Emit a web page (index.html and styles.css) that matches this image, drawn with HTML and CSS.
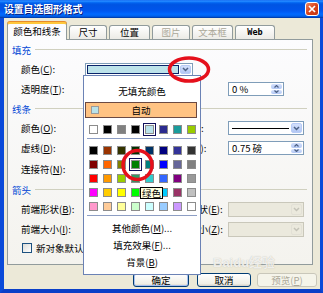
FILE: index.html
```html
<!DOCTYPE html>
<html lang="zh-CN">
<head>
  <meta charset="UTF-8">
  <meta name="viewport" content="width=device-width, initial-scale=1.0">
  <title>设置自选图形格式</title>
  <link rel="stylesheet" href="styles.css">
</head>
<body>

<div class="window">
  <div class="titlebar">
    <span class="title">设置自选图形格式</span>
    <span class="close-btn">
      <svg width="8" height="8" viewBox="0 0 8 8"><path d="M1 1L7 7M7 1L1 7" stroke="#fff" stroke-width="1.7"/></svg>
    </span>
  </div>

  <div class="dialog">
    <div class="tabs">
      <div class="tab active">颜色和线条</div>
      <div class="tab t-size">尺寸</div>
      <div class="tab t-pos">位置</div>
      <div class="tab t-pic disabled">图片</div>
      <div class="tab t-text disabled">文本框</div>
      <div class="tab t-web">Web</div>
    </div>

    <div class="panel">
      <div class="section-head"><span>填充</span></div>
      <div class="row">
        <span class="lbl">颜色(<u>C</u>):</span>
        <div class="combo fill-combo">
          <span class="fill-swatch"></span>
          <span class="drop-btn"><svg width="7" height="5" viewBox="0 0 7 5"><path d="M1 1l2.5 2.5L6 1" fill="none" stroke="#4d6185" stroke-width="1.5"/></svg></span>
        </div>
      </div>
      <div class="row">
        <span class="lbl">透明度(<u>T</u>):</span>
        <span></span>
        <span></span>
        <div class="spin short">
          <span class="val">0 %</span>
          <span class="spin-btns">
            <span><svg width="5" height="3" viewBox="0 0 5 3"><path d="M0.5 2.5l2-2 2 2" fill="none" stroke="#4d6185" stroke-width="1.2"/></svg></span>
            <span><svg width="5" height="3" viewBox="0 0 5 3"><path d="M0.5 0.5l2 2 2-2" fill="none" stroke="#4d6185" stroke-width="1.2"/></svg></span>
          </span>
        </div>
      </div>

      <div class="section-head"><span>线条</span></div>
      <div class="row">
        <span class="lbl">颜色(<u>O</u>):</span>
        <span></span>
        <span class="mid-lbl">线型(<u>S</u>):</span>
        <div class="combo">
          <span class="line-sample"><i></i></span>
          <span class="drop-btn"><svg width="7" height="5" viewBox="0 0 7 5"><path d="M1 1l2.5 2.5L6 1" fill="none" stroke="#4d6185" stroke-width="1.5"/></svg></span>
        </div>
      </div>
      <div class="row">
        <span class="lbl">虚线(<u>D</u>):</span>
        <span></span>
        <span class="mid-lbl">粗细(<u>W</u>):</span>
        <div class="spin">
          <span class="val">0.75 磅</span>
          <span class="spin-btns">
            <span><svg width="5" height="3" viewBox="0 0 5 3"><path d="M0.5 2.5l2-2 2 2" fill="none" stroke="#4d6185" stroke-width="1.2"/></svg></span>
            <span><svg width="5" height="3" viewBox="0 0 5 3"><path d="M0.5 0.5l2 2 2-2" fill="none" stroke="#4d6185" stroke-width="1.2"/></svg></span>
          </span>
        </div>
      </div>
      <div class="row tall">
        <span class="lbl">连接符(<u>N</u>):</span>
      </div>

      <div class="section-head"><span>箭头</span></div>
      <div class="row">
        <span class="lbl">前端形状(<u>B</u>):</span>
        <span></span>
        <span class="mid-lbl">末端形状(<u>E</u>):</span>
        <div class="combo disabled">
          <span class="line-sample"></span>
          <span class="drop-btn"><svg width="7" height="5" viewBox="0 0 7 5"><path d="M1 1l2.5 2.5L6 1" fill="none" stroke="#c4c3b8" stroke-width="1.5"/></svg></span>
        </div>
      </div>
      <div class="row">
        <span class="lbl">前端大小(<u>I</u>):</span>
        <span></span>
        <span class="mid-lbl">末端大小(<u>Z</u>):</span>
        <div class="combo disabled">
          <span class="line-sample"></span>
          <span class="drop-btn"><svg width="7" height="5" viewBox="0 0 7 5"><path d="M1 1l2.5 2.5L6 1" fill="none" stroke="#c4c3b8" stroke-width="1.5"/></svg></span>
        </div>
      </div>
      <div class="check-row">
        <span class="checkbox"></span>
        <span>新对象默认值(<u>F</u>)</span>
      </div>
    </div>

    <div class="buttons">
      <div class="btn ok">确定</div>
      <div class="btn cancel">取消</div>
      <div class="btn preview disabled">预览(<u>P</u>)</div>
    </div>
  </div>

  <!-- colour picker dropped down from the fill combo -->
  <div class="popup">
    <div class="no-fill">无填充颜色</div>
    <div class="auto"><span class="auto-sw"></span>自动</div>
    <div class="swatches recent" id="recent"></div>
    <div class="sep"></div>
    <div class="swatches palette" id="palette"></div>
    <div class="sep"></div>
    <div class="menu-item">其他颜色(<u>M</u>)...</div>
    <div class="menu-item">填充效果(<u>F</u>)...</div>
    <div class="menu-item">背景(<u>B</u>)</div>
  </div>

  <div class="tooltip">绿色</div>
  <div class="watermark">Baidu经验</div>

  <svg class="marks" width="323" height="293" viewBox="0 0 323 293">
    <ellipse cx="189" cy="69.5" rx="19.5" ry="11.5" fill="none" stroke="#e5101c" stroke-width="3.5"/>
    <circle cx="137.5" cy="165" r="14.5" fill="none" stroke="#e5101c" stroke-width="3.5"/>
  </svg>
</div>

<script>
  const recent = ['#ffffff', '#000000', '#808080', '#000000', '#b9e2ea', '#2b2b8f', '#1a9c9c', '#99cc00'];
  const palette = [
    '#000000', '#993300', '#333300', '#003300', '#003366', '#000080', '#333399', '#333333',
    '#800000', '#ff6600', '#808000', '#008000', '#008080', '#0000ff', '#666699', '#808080',
    '#ff0000', '#ff9900', '#99cc00', '#339966', '#33cccc', '#3366ff', '#800080', '#999999',
    '#ff00ff', '#ffcc00', '#ffff00', '#00ff00', '#00ffff', '#00ccff', '#993366', '#c0c0c0',
    '#ff99cc', '#ffcc99', '#ffff99', '#ccffcc', '#ccffff', '#99ccff', '#cc99ff', '#ffffff'
  ];

  function fillSwatches(id, colors, marked) {
    const box = document.getElementById(id);
    colors.forEach((c, i) => {
      const cell = document.createElement('span');
      cell.className = 'cell';
      const sw = document.createElement('span');
      sw.className = i === marked ? 'sw sel' : 'sw';
      sw.style.backgroundColor = c;
      cell.appendChild(sw);
      box.appendChild(cell);
    });
  }

  fillSwatches('recent', recent, 4);
  fillSwatches('palette', palette, 11); // hovered green
</script>

</body>
</html>
```

FILE: styles.css
```css
* {
  box-sizing: border-box;
}

body {
  margin: 0;
  width: 323px;
  height: 293px;
  overflow: hidden;
  font-family: "Noto Sans CJK SC", "Liberation Sans", sans-serif;
  font-size: 9.5px;
  color: #000;
}

u {
  text-decoration: underline;
}

.window {
  position: relative;
  width: 323px;
  height: 293px;
  display: flex;
  flex-direction: column;
}

.titlebar {
  height: 18px;
  display: flex;
  align-items: center;
  justify-content: space-between;
  padding: 0 4px 0 4px;
  background: linear-gradient(#0058ee 0%, #3593ff 5%, #127dff 10%, #0262ee 16%, #0054e3 26%, #0055eb 56%, #005bf5 66%, #026afe 78%, #0062ef 88%, #0052d6 94%, #003092 100%);
}

.title {
  color: #fff;
  font-weight: bold;
  font-size: 9.8px;
  text-shadow: 1px 1px 0 #0a1e7c;
}

.close-btn {
  width: 14px;
  height: 14px;
  border: 1px solid #fff;
  border-radius: 3px;
  background: linear-gradient(135deg, #f08560, #d9441d 50%, #c23510);
  display: flex;
  align-items: center;
  justify-content: center;
}

.dialog {
  flex: 1;
  background: #ece9d8;
  border-left: 4px solid #0a4ad9;
  border-right: 3px solid #0a4ad9;
  border-bottom: 4px solid #0a3fc8;
  padding: 4px 3px 2px 3px;
  display: flex;
  flex-direction: column;
}

/* tabs */
.tabs {
  height: 17px;
  display: flex;
  align-items: flex-end;
}

.tab {
  height: 14px;
  margin-left: 2px;
  border: 1px solid #919b9c;
  border-bottom: none;
  border-radius: 3px 3px 0 0;
  background: linear-gradient(#ffffff, #ecebe6);
  display: flex;
  align-items: center;
  justify-content: center;
  line-height: 1;
}

.tab.active {
  width: 60px;
  height: 18px;
  margin-left: 0;
  margin-bottom: -1px;
  position: relative;
  z-index: 1;
  background: #fcfcfe;
  border-top: 2px solid #ffc83c;
  box-shadow: 0 -1px 0 #e68b2c;
}

.t-size { width: 38px; }
.t-pos { width: 41px; }
.t-pic { width: 38px; }
.t-text { width: 41px; }
.t-web {
  width: 40px;
  font-family: "DejaVu Sans Mono", monospace;
  font-weight: bold;
  font-size: 8.5px;
}

.tab.disabled {
  color: #aca899;
}

/* tab page */
.panel {
  width: 306px;
  height: 226px;
  border: 1px solid #919b9c;
  background: linear-gradient(#fcfcfe, #f4f3ee);
}

.section-head {
  height: 19px;
  display: flex;
  align-items: center;
  gap: 4px;
  padding: 0 5px 0 4px;
  color: #0046d5;
}

.section-head::after {
  content: "";
  flex: 1;
  height: 1px;
  background: #d0d0bf;
}

.row {
  height: 20px;
  display: grid;
  grid-template-columns: 64px 80px 63px 76px;
  align-items: center;
  padding-left: 13px;
  white-space: nowrap;
}

.row.tall {
  height: 22px;
}

.mid-lbl {
  padding-left: 5px;
}

.combo {
  height: 14px;
  border: 1px solid #7f9db9;
  background: #fff;
  display: flex;
  padding: 1px;
}

.fill-combo {
  grid-column: 2 / 4;
  width: 108px;
  height: 13px;
}

.fill-swatch {
  flex: 1;
  margin-right: 1px;
  border: 1px solid #0a246a;
  background: #bde3ea;
}

.drop-btn {
  width: 11px;
  margin-left: auto;
  border: 1px solid #b8cbf6;
  border-radius: 2px;
  background: linear-gradient(#d4e0fc, #b2c7f4);
  display: flex;
  align-items: center;
  justify-content: center;
}

.line-sample {
  flex: 1;
  display: flex;
  align-items: center;
  padding: 0 2px;
}

.line-sample i {
  flex: 1;
  height: 1px;
  background: #000;
}

.combo.disabled {
  height: 15px;
  border-color: #c9c7ba;
  background: #ebe9dd;
}

.combo.disabled .drop-btn {
  border-color: #e2e0d6;
  background: #ebe9dd;
}

.spin {
  height: 14px;
  border: 1px solid #7f9db9;
  background: #fff;
  display: flex;
  padding: 1px;
}

.spin.short {
  width: 56px;
}

.spin .val {
  flex: 1;
  padding-left: 2px;
  line-height: 10px;
}

.spin-btns {
  width: 11px;
  display: flex;
  flex-direction: column;
  gap: 1px;
}

.spin-btns span {
  flex: 1;
  border-radius: 2px;
  background: linear-gradient(#d4e0fc, #b2c7f4);
  display: flex;
  align-items: center;
  justify-content: center;
}

.check-row {
  height: 18px;
  display: flex;
  align-items: center;
  gap: 4px;
  padding-left: 14px;
}

.checkbox {
  width: 10px;
  height: 10px;
  border: 1px solid #1c5180;
  background: linear-gradient(135deg, #dcdcd7, #ffffff);
}

/* bottom buttons */
.buttons {
  margin-top: 8px;
  height: 14px;
  display: flex;
  justify-content: flex-end;
}

.btn {
  height: 14px;
  border: 1px solid #003c74;
  border-radius: 3px;
  background: linear-gradient(#ffffff, #f0efe7 80%, #d6d0c5);
  display: flex;
  align-items: center;
  justify-content: center;
}

.ok {
  width: 56px;
  box-shadow: inset 0 0 0 1px #a9c1ef;
}

.cancel {
  width: 54px;
  margin-left: 8px;
}

.preview {
  width: 60px;
  margin-left: 6px;
}

.btn.disabled {
  border-color: #c9c7ba;
  color: #aca899;
  background: #f5f4ea;
}

/* colour picker popup */
.popup {
  position: absolute;
  left: 83px;
  top: 75px;
  width: 118px;
  height: 200px;
  border: 1px solid #6b82b5;
  background: #fff;
  display: flex;
  flex-direction: column;
}

.no-fill {
  margin-top: 6px;
  height: 18px;
  line-height: 18px;
  text-align: center;
}

.auto {
  margin: 2px 0 0 1px;
  width: 112px;
  height: 16px;
  border: 1px solid #6b4a43;
  background: #ffc383;
  display: flex;
  align-items: center;
  justify-content: center;
  position: relative;
}

.auto-sw {
  position: absolute;
  left: 5px;
  top: 3px;
  width: 8px;
  height: 8px;
  border: 1px solid #9a9a9a;
  background: #b9e2ea;
}

.swatches {
  margin-left: 2px;
  display: grid;
  grid-template-columns: repeat(8, 14px);
  grid-auto-rows: 14px;
}

.recent {
  margin-top: 4px;
}

.palette {
  margin-top: 4px;
}

.cell {
  display: flex;
  align-items: center;
  justify-content: center;
}

.sw {
  width: 9px;
  height: 9px;
  border: 1px solid #8c8c8c;
}

.sw.sel {
  outline: 1px solid #10105c;
  outline-offset: 1px;
}

.sep {
  margin: 2px 3px 0 3px;
  height: 1px;
  background: #8d9ec4;
}

.menu-item {
  height: 17px;
  line-height: 17px;
  text-align: center;
}

.sep + .menu-item {
  margin-top: 4px;
}

.tooltip {
  position: absolute;
  left: 140px;
  top: 187px;
  width: 23px;
  height: 12px;
  border: 1px solid #000;
  background: #ffffe1;
  line-height: 10px;
  text-align: center;
}

.watermark {
  position: absolute;
  left: 213px;
  top: 252px;
  font-family: "Liberation Sans", "Noto Sans CJK SC", sans-serif;
  font-weight: bold;
  font-size: 13px;
  color: rgba(255, 255, 255, 0.75);
  text-shadow: 0 0 1px #b9b7ab;
}

.marks {
  position: absolute;
  left: 0;
  top: 0;
  pointer-events: none;
}
```
